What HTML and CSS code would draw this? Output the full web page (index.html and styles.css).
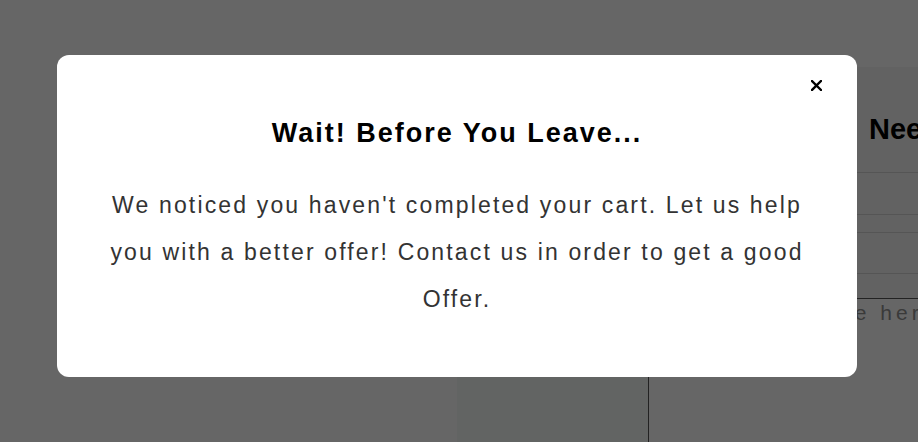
FILE: index.html
```html
<!DOCTYPE html>
<html lang="en">
<head>
  <meta charset="UTF-8" />
  <meta name="viewport" content="width=device-width, initial-scale=1.0" />
  <title>Cart</title>
  <link rel="stylesheet" href="styles.css">
</head>
<body>
  <div class="page">
    <div class="gallery"></div>
    <div class="product"></div>
    <div class="help">
      <div class="help-form">
        <h3>Need Help?</h3>
        <div class="field"></div>
        <div class="field"></div>
      </div>
      <div class="message">Your message here</div>
    </div>
  </div>

  <div class="overlay">
    <div class="modal">
      <button class="close" aria-label="Close">
        <svg width="11" height="11" viewBox="0 0 11 11">
          <path d="M1 1 L10 10 M10 1 L1 10" stroke="#000" stroke-width="2.4" stroke-linecap="square" />
        </svg>
      </button>
      <h2>Wait! Before You Leave...</h2>
      <p>We noticed you haven't completed your cart. Let us help you with a better offer! Contact us in order to get a good Offer.</p>
    </div>
  </div>
</body>
</html>
```

FILE: styles.css
```css
body {
  margin: 0;
  font-family: "Liberation Sans", Arial, sans-serif;
  background: #fff;
}
.page {
  display: flex;
  height: 442px;
  overflow: hidden;
}
.gallery {
  width: 457px;
  flex-shrink: 0;
}
.product {
  width: 191px;
  flex-shrink: 0;
  margin-top: 67px;
  background: #f5faf7;
  border-right: 1px solid #555;
}
.help {
  flex: 1;
  min-width: 0;
  padding-top: 67px;
  display: flex;
  flex-direction: column;
}
.help-form {
  background: #f6f6f6;
  padding-top: 46px;
}
.help h3 {
  margin: 0 0 26px;
  padding-left: 220px;
  font-size: 29px;
  white-space: nowrap;
  color: #000;
}
.field {
  height: 41px;
  border-top: 1px solid #d4d4d4;
  border-bottom: 1px solid #d4d4d4;
  margin-bottom: 17px;
}
.field + .field {
  height: 40px;
  margin-bottom: 24px;
}
.message {
  flex: 1;
  border-top: 1px solid #555;
  padding: 2px 0 0 40px;
  font-size: 21px;
  letter-spacing: 4px;
  color: #919191;
  white-space: nowrap;
}
.overlay {
  position: fixed;
  inset: 0;
  background: rgba(0, 0, 0, 0.6);
  padding: 55px 0 0 57px;
}
.modal {
  position: relative;
  width: 800px;
  height: 322px;
  box-sizing: border-box;
  background: #fff;
  border-radius: 12px;
  padding: 63px 50px 0;
  text-align: center;
}
.close {
  position: absolute;
  top: 25px;
  right: 35px;
  border: 0;
  background: none;
  padding: 0;
  width: 11px;
  height: 11px;
  cursor: pointer;
}
.close svg {
  display: block;
}
.modal h2 {
  margin: 0;
  font-size: 27px;
  letter-spacing: 2px;
  color: #000;
}
.modal p {
  margin: 33px 0 0;
  font-size: 23px;
  line-height: 47px;
  letter-spacing: 2.15px;
  color: #333;
}
```
